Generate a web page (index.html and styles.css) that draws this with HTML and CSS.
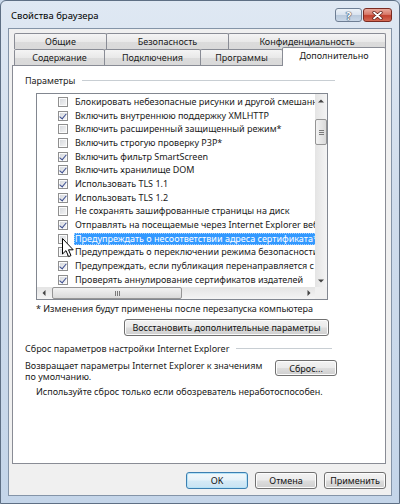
FILE: index.html
```html
<!DOCTYPE html>
<html lang="ru">
<head>
    <meta charset="UTF-8">
    <title>Свойства браузера</title>
    <link rel="stylesheet" href="styles.css">
</head>
<body>
<div class="window">
    <div class="titlebar">
        <span class="title">Свойства браузера</span>
        <div class="caption-buttons">
            <div class="cap-btn help">?</div>
            <div class="cap-btn close">
                <svg width="11" height="9" viewBox="0 0 11 9">
                    <path d="M2 1.5 L9 7.5 M9 1.5 L2 7.5" stroke="#5a1a12" stroke-width="3.2" stroke-linecap="round"/>
                    <path d="M2 1.5 L9 7.5 M9 1.5 L2 7.5" stroke="#fff" stroke-width="1.8" stroke-linecap="round"/>
                </svg>
            </div>
        </div>
    </div>

    <div class="client">
        <div class="tabs">
            <div class="tab-row">
                <div class="tab w-general">Общие</div>
                <div class="tab w-security">Безопасность</div>
                <div class="tab w-privacy">Конфиденциальность</div>
            </div>
            <div class="tab-row">
                <div class="tab w-content">Содержание</div>
                <div class="tab w-connections">Подключения</div>
                <div class="tab w-programs">Программы</div>
                <div class="tab w-advanced active">Дополнительно</div>
            </div>
        </div>

        <div class="panel">
            <div class="group-head settings-head">
                <span>Параметры</span>
                <div class="group-line"></div>
            </div>

            <div class="listbox">
                <div class="list-main">
                    <div class="list-items">
                        <div class="item"><span class="check"></span><span class="label">Блокировать небезопасные рисунки и другой смешанный контент</span></div>
                        <div class="item"><span class="check on"></span><span class="label">Включить внутреннюю поддержку XMLHTTP</span></div>
                        <div class="item"><span class="check"></span><span class="label">Включить расширенный защищенный режим*</span></div>
                        <div class="item"><span class="check"></span><span class="label">Включить строгую проверку P3P*</span></div>
                        <div class="item"><span class="check on"></span><span class="label">Включить фильтр SmartScreen</span></div>
                        <div class="item"><span class="check on"></span><span class="label">Включить хранилище DOM</span></div>
                        <div class="item"><span class="check on"></span><span class="label">Использовать TLS 1.1</span></div>
                        <div class="item"><span class="check on"></span><span class="label">Использовать TLS 1.2</span></div>
                        <div class="item"><span class="check"></span><span class="label">Не сохранять зашифрованные страницы на диск</span></div>
                        <div class="item"><span class="check on"></span><span class="label">Отправлять на посещаемые через Internet Explorer веб-сайты запросы "Do Not Track"</span></div>
                        <div class="item selected"><span class="check"></span><span class="label">Предупреждать о несоответствии адреса сертификата*</span></div>
                        <div class="item"><span class="check"></span><span class="label">Предупреждать о переключении режима безопасности</span></div>
                        <div class="item"><span class="check on"></span><span class="label">Предупреждать, если публикация перенаправляется с другого сайта</span></div>
                        <div class="item"><span class="check on"></span><span class="label">Проверять аннулирование сертификатов издателей</span></div>
                    </div>
                    <div class="vscroll">
                        <div class="arrow up"></div>
                        <div class="vthumb"><i></i><i></i><i></i></div>
                        <div class="vtrack"></div>
                        <div class="arrow down"></div>
                    </div>
                </div>
                <div class="list-bottom">
                    <div class="hscroll">
                        <div class="arrow left"></div>
                        <div class="hthumb"><i></i><i></i><i></i></div>
                        <div class="htrack"></div>
                        <div class="arrow right"></div>
                    </div>
                    <div class="corner"></div>
                </div>

                <!-- mouse pointer over the checkbox column -->
                <svg class="pointer" width="12" height="20" viewBox="0 0 12 20">
                    <path d="M0.5 0.5 L0.5 16 L4 12.6 L6.6 18.6 L9 17.6 L6.5 11.8 L11.2 11.8 Z" fill="#fff" stroke="#000" stroke-width="1"/>
                </svg>
            </div>

            <p class="note restart-note">* Изменения будут применены после перезапуска компьютера</p>

            <div class="restore-row">
                <button class="btn restore">Восстановить дополнительные параметры</button>
            </div>

            <div class="group-head reset-head">
                <span>Сброс параметров настройки Internet Explorer</span>
                <div class="group-line"></div>
            </div>

            <div class="reset-row">
                <div class="reset-text">
                    <p>Возвращает параметры Internet Explorer к значениям</p>
                    <p>по умолчанию.</p>
                </div>
                <button class="btn reset">Сброс...</button>
            </div>

            <p class="note">Используйте сброс только если обозреватель неработоспособен.</p>
        </div>

        <div class="dialog-buttons">
            <button class="btn default">OK</button>
            <button class="btn">Отмена</button>
            <button class="btn">Применить</button>
        </div>
    </div>
</div>
</body>
</html>
```

FILE: styles.css
```css
* {
    box-sizing: border-box;
}

body {
    margin: 0;
    width: 400px;
    height: 504px;
    overflow: hidden;
    font-family: "Noto Sans", "Open Sans", sans-serif;
    font-size: 9px;
    color: #1a1a1a;
    background: #c9d8ea;
}

p {
    margin: 0;
}

/* Aero frame */
.window {
    width: 400px;
    height: 504px;
    border: 1px solid #5e6f84;
    border-radius: 6px 6px 0 0;
    background: linear-gradient(180deg, #dfe8f3 0%, #cfdcec 40%, #c4d5e9 100%);
    display: flex;
    flex-direction: column;
}

.titlebar {
    height: 27px;
    display: flex;
    align-items: flex-start;
    padding: 0 7px 0 10px;
}

.title {
    font-size: 9.5px;
    color: #000;
    margin-top: 8px;
}

.caption-buttons {
    margin-left: auto;
    margin-top: 7px;
    display: flex;
    gap: 1px;
}

.cap-btn {
    height: 14px;
    border-radius: 3px;
    display: flex;
    align-items: center;
    justify-content: center;
}

.cap-btn.help {
    width: 27px;
    border: 1px solid #6e7e94;
    background: linear-gradient(180deg, #edf2f8 0%, #d9e3ef 48%, #b9c9dc 52%, #cad8e8 100%);
    color: #fff;
    font-size: 11px;
    font-weight: bold;
    text-shadow: 0 0 1px #2c3e56, 0 0 1px #2c3e56, 0 0 1px #2c3e56;
}

.cap-btn.close {
    width: 29px;
    border: 1px solid #7a2b22;
    background: linear-gradient(180deg, #e9a99c 0%, #d8796a 45%, #c2412f 55%, #d36a55 100%);
}

.client {
    margin: 0 7px 7px 7px;
    height: 468px;
    border: 1px solid #8494a8;
    background: #f0f0f0;
    padding: 4px 5px 0 3px;
}

/* tab strip, selected row sits against the panel */
.tabs {
    margin-left: 2px;
}

.tab-row {
    display: flex;
    height: 16px;
}

.tab {
    height: 16px;
    border: 1px solid #898c95;
    border-bottom: none;
    border-radius: 2px 2px 0 0;
    background: linear-gradient(180deg, #f4f4f4 0%, #e9e9e9 50%, #dcdcdc 51%, #d9d9d9 100%);
    display: flex;
    align-items: center;
    justify-content: center;
    margin-right: -1px;
    color: #1a1a1a;
    white-space: nowrap;
}

.w-general { width: 93px; }
.w-security { width: 123px; }
.w-privacy { width: 158px; }
.w-content { width: 91px; }
.w-connections { width: 97px; }
.w-programs { width: 83px; }
.w-advanced { width: 104px; }

.tab.active {
    position: relative;
    z-index: 2;
    height: 19px;
    margin-top: -2px;
    background: #fff;
    padding-bottom: 3px;
}

.panel {
    width: 374px;
    height: 399px;
    border: 1px solid #898c95;
    background: #fff;
    position: relative;
    z-index: 1;
}

.group-head {
    display: flex;
    align-items: center;
    height: 12px;
    padding-left: 12px;
    color: #222;
    white-space: nowrap;
}

.group-line {
    flex: 1;
    height: 1px;
    margin-left: 7px;
    background: #c8ced3;
}

.settings-head {
    width: 322px;
    margin-top: 8px;
}

.reset-head {
    width: 319px;
    margin-top: 6px;
}

/* advanced settings list */
.listbox {
    position: relative;
    margin: 7px 0 0 23px;
    width: 292px;
    height: 207px;
    border: 1px solid #828790;
    background: #fff;
}

.list-main {
    display: flex;
    height: 193px;
}

.list-items {
    width: 278px;
    overflow: hidden;
    padding-top: 1px;
}

.item {
    height: 13.7px;
    display: flex;
    align-items: center;
    padding-left: 21px;
    white-space: nowrap;
}

.check {
    flex: none;
    width: 10px;
    height: 10px;
    border: 1px solid #8f8f8f;
    background: linear-gradient(135deg, #d3d6db 0%, #f7f7f7 100%);
    box-shadow: inset 0 0 0 1px #fbfbfb;
    position: relative;
}

.check.on::after {
    content: "";
    position: absolute;
    left: 2px;
    top: 0;
    width: 3px;
    height: 6px;
    border: solid #3b4d8f;
    border-width: 0 1.6px 1.6px 0;
    transform: rotate(40deg);
}

.label {
    margin-left: 6px;
    height: 12px;
    line-height: 12px;
    padding: 0 1px;
}

.item.selected .label {
    flex: 1;
    background: #3399ff;
    color: #fff;
    outline: 1px dotted #a6d0ff;
    outline-offset: -1px;
}

.vscroll {
    width: 12px;
    display: flex;
    flex-direction: column;
    background: linear-gradient(90deg, #e4e4e4, #f4f4f4);
}

.vtrack, .htrack {
    flex: 1;
}

.arrow {
    flex: none;
    position: relative;
    width: 12px;
    height: 13px;
}

.arrow::after {
    content: "";
    position: absolute;
    left: 50%;
    top: 50%;
    border: 3px solid transparent;
}

.arrow.up::after {
    border-bottom-color: #444;
    transform: translate(-50%, -75%);
}

.arrow.down::after {
    border-top-color: #444;
    transform: translate(-50%, -25%);
}

.arrow.left::after {
    border-right-color: #444;
    transform: translate(-75%, -50%);
}

.arrow.right::after {
    border-left-color: #444;
    transform: translate(-25%, -50%);
}

.vthumb, .hthumb {
    flex: none;
    border: 1px solid #959595;
    border-radius: 2px;
    display: flex;
    align-items: center;
    justify-content: center;
    gap: 1px;
}

.vthumb {
    height: 26px;
    margin: 12px 0 0 0;
    flex-direction: column;
    background: linear-gradient(90deg, #f2f2f2, #dadada);
}

.vthumb i {
    width: 5px;
    height: 1px;
    background: #7a7a7a;
}

.hthumb {
    width: 130px;
    margin-left: 2px;
    background: linear-gradient(180deg, #f2f2f2, #dadada);
}

.hthumb i {
    width: 1px;
    height: 5px;
    background: #7a7a7a;
}

.list-bottom {
    display: flex;
    height: 12px;
}

.hscroll {
    width: 278px;
    display: flex;
    background: linear-gradient(180deg, #e4e4e4, #f4f4f4);
}

.hscroll .arrow {
    width: 13px;
    height: 12px;
}

.corner {
    width: 12px;
    background: #f0f0f0;
}

.pointer {
    position: absolute;
    left: 25px;
    top: 144px;
}

.note {
    margin-left: 23px;
    height: 12px;
    line-height: 12px;
    white-space: nowrap;
}

.restart-note {
    margin-top: 3px;
}

/* push buttons */
.btn {
    font-family: inherit;
    font-size: 9px;
    color: #111;
    height: 17px;
    padding: 0;
    border: 1px solid #707070;
    border-radius: 3px;
    background: linear-gradient(180deg, #f3f3f3 0%, #ebebeb 48%, #dddddd 52%, #cfcfcf 100%);
    box-shadow: inset 0 0 0 1px #fcfcfc;
    white-space: nowrap;
}

.restore-row {
    margin-top: 4px;
    padding-left: 111px;
}

.btn.restore {
    width: 205px;
}

.reset-row {
    display: flex;
    margin-top: 6px;
}

.reset-text {
    width: 262px;
    padding-left: 12px;
    white-space: nowrap;
}

.reset-text p {
    height: 11px;
    line-height: 11px;
}

.btn.reset {
    width: 62px;
    height: 16px;
}

.reset-row + .note {
    margin-top: 4px;
}

.dialog-buttons {
    display: flex;
    justify-content: flex-end;
    gap: 7px;
    margin-top: 8px;
}

.dialog-buttons .btn {
    width: 62px;
}

.btn.default {
    border-color: #3c7fb1;
    box-shadow: inset 0 0 0 1px #b6e3f7;
    background: linear-gradient(180deg, #f2f8fb 0%, #e6f2f9 48%, #d5eaf6 52%, #c9e3f3 100%);
}
```
